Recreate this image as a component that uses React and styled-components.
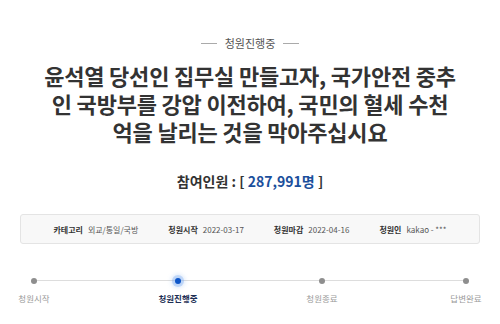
import React from "react";
import styled, { createGlobalStyle } from "styled-components";

const Global = createGlobalStyle`
  html, body { margin: 0; padding: 0; background: #fff; }
  body { font-family: "Noto Sans CJK KR", "Noto Sans", sans-serif; color: #333; }
`;

const Page = styled.div`
  width: 500px;
  height: 324px;
  overflow: hidden;
  padding-top: 36px;
  box-sizing: border-box;
`;

const Status = styled.div`
  display: flex;
  align-items: center;
  justify-content: center;
  gap: 8px;
  font-size: 11px;
  line-height: 14px;
  color: #555;
`;

const Dash = styled.span`
  width: 16px;
  height: 1px;
  background: #aaa;
`;

const Title = styled.h1`
  margin: 11px 12px 0;
  text-align: center;
  font-size: 22px;
  line-height: 28px;
  font-weight: 700;
  color: #333;
  letter-spacing: -0.2px;
`;

const Count = styled.div`
  margin-top: 26px;
  text-align: center;
  font-size: 14px;
  line-height: 20px;
  font-weight: 700;
  color: #333;
`;

const Num = styled.span`
  color: #1b4f9c;
`;

const InfoBox = styled.div`
  margin: 23px 20px 0;
  height: 30px;
  box-sizing: border-box;
  background: #f8f8f8;
  border: 1px solid #e4e4e4;
  border-radius: 3px;
  display: flex;
  align-items: center;
  justify-content: center;
  gap: 30px;
  font-size: 8px;
  color: #555;
`;

const Field = styled.div`
  display: flex;
  align-items: center;
  gap: 5px;
`;

const Label = styled.span`
  font-weight: 700;
  color: #333;
`;

const Timeline = styled.div`
  position: relative;
  margin: 31px 16px 0;
  display: flex;
  justify-content: space-between;
  &::before {
    content: "";
    position: absolute;
    left: 18px;
    right: 18px;
    top: 5px;
    height: 1px;
    background: #ddd;
  }
`;

const Step = styled.div`
  position: relative;
  width: 36px;
  display: flex;
  flex-direction: column;
  align-items: center;
  gap: 9px;
`;

const Dot = styled.span`
  width: 6px;
  height: 6px;
  margin-top: 3px;
  border-radius: 50%;
  background: ${(p) => (p.$active ? "#0c55c8" : "#8e8e8e")};
  box-shadow: ${(p) => (p.$active ? "0 0 0 3px rgba(120,170,240,0.35), 0 0 4px 4px rgba(120,170,240,0.25)" : "none")};
`;

const StepLabel = styled.span`
  font-size: 8.5px;
  line-height: 10px;
  white-space: nowrap;
  font-weight: ${(p) => (p.$active ? 700 : 400)};
  color: ${(p) => (p.$active ? "#1e2f55" : "#999")};
`;

const steps = ["청원시작", "청원진행중", "청원종료", "답변완료"];
const fields = [
  ["카테고리", "외교/통일/국방"],
  ["청원시작", "2022-03-17"],
  ["청원마감", "2022-04-16"],
  ["청원인", "kakao - ***"],
];

export default function App() {
  return (
    <Page>
      <Global />
      <Status>
        <Dash />
        청원진행중
        <Dash />
      </Status>
      <Title>
        윤석열 당선인 집무실 만들고자, 국가안전 중추
        <br />
        인 국방부를 강압 이전하여, 국민의 혈세 수천
        <br />
        억을 날리는 것을 막아주십시요
      </Title>
      <Count>
        참여인원 : [ <Num>287,991명</Num> ]
      </Count>
      <InfoBox>
        {fields.map(([l, v]) => (
          <Field key={l}>
            <Label>{l}</Label>
            <span>{v}</span>
          </Field>
        ))}
      </InfoBox>
      <Timeline>
        {steps.map((s, i) => (
          <Step key={s}>
            <Dot $active={i === 1} />
            <StepLabel $active={i === 1}>{s}</StepLabel>
          </Step>
        ))}
      </Timeline>
    </Page>
  );
}
